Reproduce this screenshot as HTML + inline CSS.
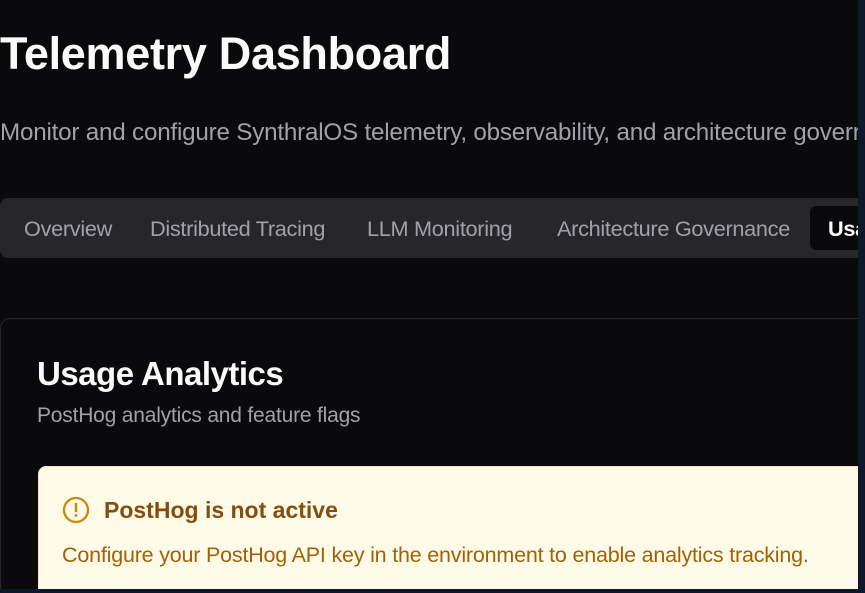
<!DOCTYPE html>
<html><head><meta charset="utf-8"><style>
html,body{margin:0;padding:0;}
body{width:865px;height:593px;background:#0f172a;position:relative;overflow:hidden;font-family:"Liberation Sans",sans-serif;}
#main{position:absolute;left:0;top:0;width:858px;height:589px;background:#0a0a0c;overflow:hidden;}
.a{position:absolute;white-space:nowrap;}
#tabs{position:absolute;left:0;top:198px;width:880px;height:60px;background:#27272a;border-radius:8px;}
.tab{position:absolute;top:18px;font-size:21.7px;color:#a1a1aa;letter-spacing:-0.3px;}
#card{position:absolute;left:0;top:318px;width:880px;height:300px;border:1px solid #27272a;border-radius:10px;background:#0a0a0c;}
#alert{position:absolute;left:38px;top:466px;width:860px;height:140px;background:#fefae8;border:1px solid #f3e6b8;border-radius:8px;}
</style></head><body>
<div id="main">
<div class="a" style="left:0;top:28px;font-size:45px;font-weight:bold;color:#fafafa;letter-spacing:-0.3px;">Telemetry Dashboard</div>
<div class="a" style="left:0;top:119px;font-size:24.2px;color:#a1a1aa;letter-spacing:-0.2px;">Monitor and configure SynthralOS telemetry, observability, and architecture governance</div>
<div id="tabs">
<div class="tab" style="left:24px;">Overview</div>
<div class="tab" style="left:150px;">Distributed Tracing</div>
<div class="tab" style="left:367px;">LLM Monitoring</div>
<div class="tab" style="left:557px;">Architecture Governance</div>
<div style="position:absolute;left:810px;top:8px;width:80px;height:44px;background:#09090b;border-radius:6px;"></div>
<div class="tab" style="left:828px;color:#fafafa;font-weight:bold;">Usage</div>
</div>
<div id="card"></div>
<div class="a" style="left:37px;top:355px;font-size:33px;font-weight:bold;color:#fafafa;letter-spacing:-0.5px;">Usage Analytics</div>
<div class="a" style="left:37px;top:404px;font-size:21px;color:#a1a1aa;letter-spacing:-0.2px;">PostHog analytics and feature flags</div>
<div id="alert"></div>
<svg class="a" style="left:62px;top:496px" width="28" height="28" viewBox="0 0 28 28"><circle cx="14" cy="14" r="12" fill="none" stroke="#ca8a04" stroke-width="2.3"/><line x1="14" y1="8" x2="14" y2="15" stroke="#ca8a04" stroke-width="2.5" stroke-linecap="round"/><circle cx="14" cy="19.5" r="1.4" fill="#ca8a04"/></svg>
<div class="a" style="left:104px;top:497px;font-size:23px;font-weight:bold;color:#854d0e;">PostHog is not active</div>
<div class="a" style="left:62px;top:543px;font-size:21.5px;color:#a16207;letter-spacing:-0.2px;">Configure your PostHog API key in the environment to enable analytics tracking.</div>
</div>
</body></html>
